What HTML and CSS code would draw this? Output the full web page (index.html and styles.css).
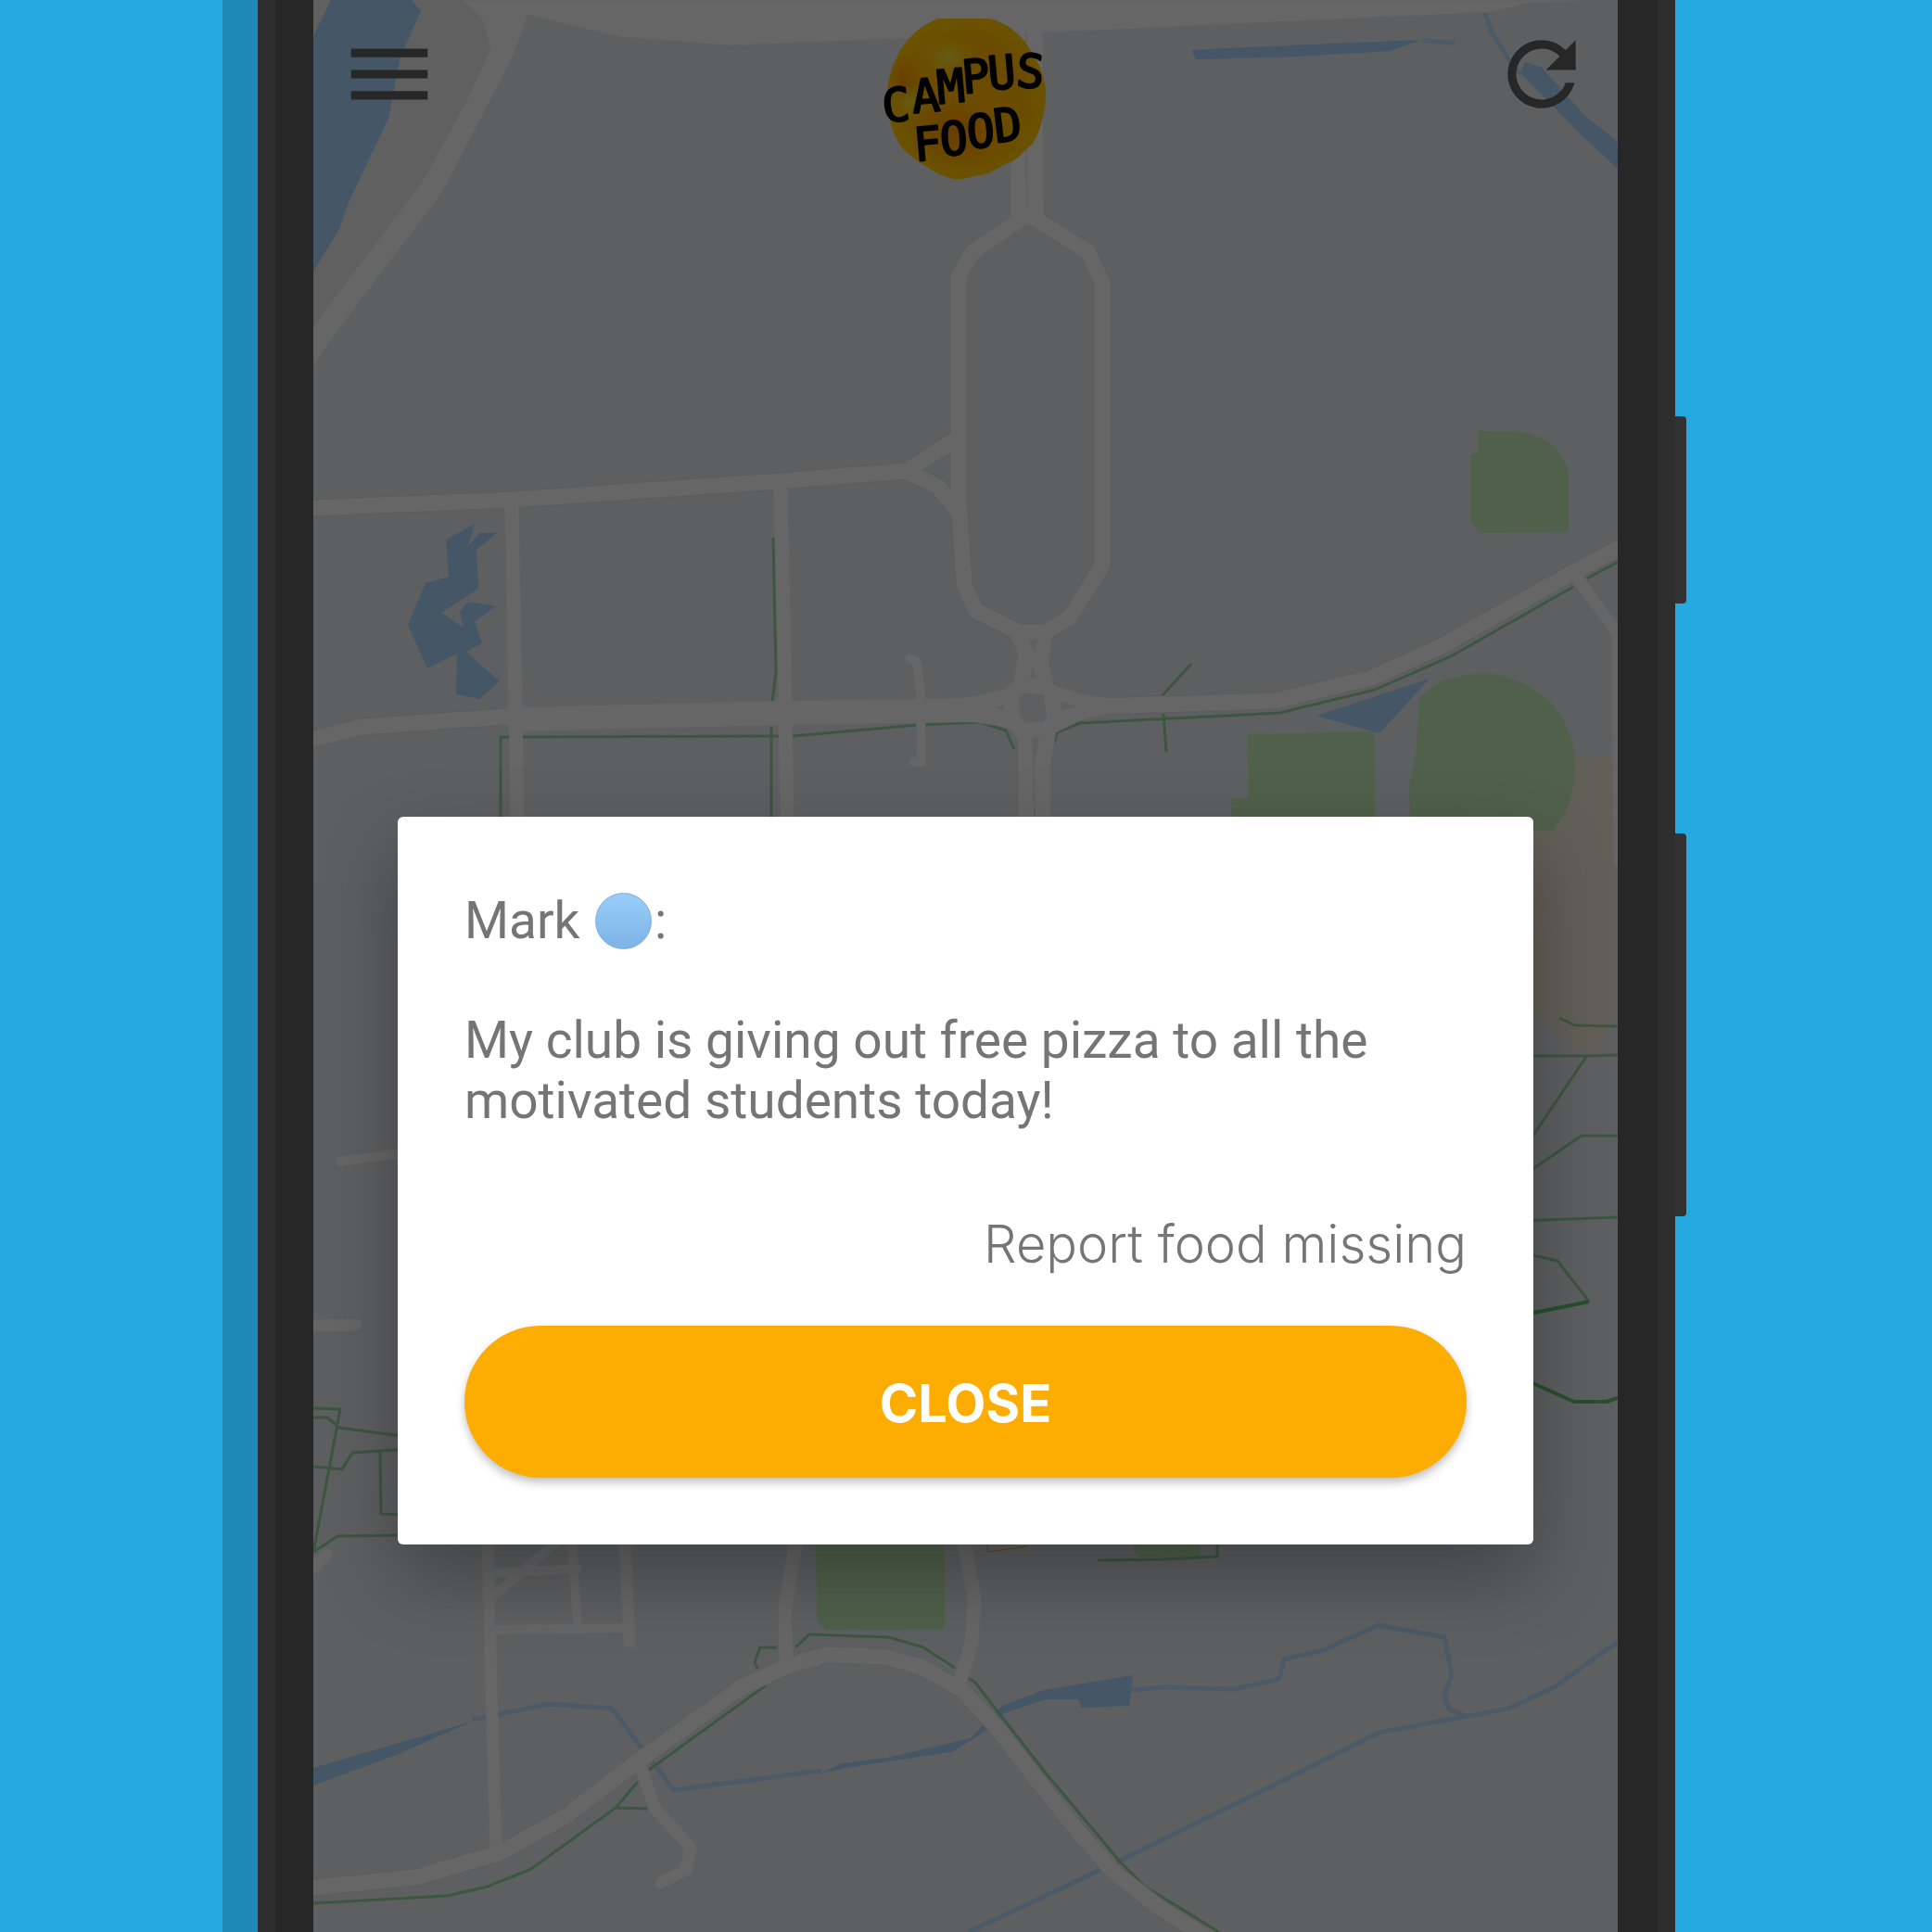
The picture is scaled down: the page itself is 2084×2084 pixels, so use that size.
FILE: index.html
```html
<!DOCTYPE html>
<html lang="en">
<head>
<meta charset="utf-8">
<meta name="viewport" content="width=device-width, initial-scale=1">
<title>Campus Food</title>
<link rel="stylesheet" href="styles.css">
</head>
<body>
<div class="stage">
  <div class="device">
    <span class="side-key side-key-power"></span>
    <span class="side-key side-key-volume"></span>
    <div class="screen">
      <svg class="map" viewBox="338 0 1407 2084" preserveAspectRatio="xMidYMin slice" aria-hidden="true">
        <!-- ground -->
        <path class="ground-alt" d="M338 0H498L520 20L529 53L500 115L456 195L380 296L338 352Z"/>
        <path class="plaza" d="M1699 816L1739 814L1742 896L1745 898V1100L1737 1106L1728 1128L1715 1139L1707 1136L1654 1094L1640 1080V896Z"/>
        <!-- parks -->
        <g class="park">
          <path d="M1594 465L1645 466L1667 474L1681 486L1690 503L1692 511V574L1597 575L1586 563V490H1594Z"/>
          <path d="M1345 792L1482 789L1483 890H1329L1328 862L1347 861Z"/>
          <path d="M1531 754L1545 741L1555 735L1580 728L1600 726L1620 728L1645 738L1667 752L1675 760L1688 780L1698 806L1699 835L1694 862L1688 877L1676 895L1640 896L1521 890L1520 845L1527 818Z"/>
          <path d="M880 1660H1019V1757L891 1758L881 1749Z"/>
          <path d="M1223 1660H1294V1679L1230 1680L1223 1673Z"/>
        </g>
        <!-- water -->
        <g class="water">
          <path d="M338 39L357 0H444L454 12L432 61L419 128L376 218L366 247L338 293Z"/>
          <path d="M481 582L512 565L504 590L517 575H536L514 593L516 635L476 661L500 677L496 660L505 649L535 654L512 670L520 694L503 703L539 735L517 754L492 749L493 705L461 721L440 674L459 629L484 622Z"/>
          <path d="M1285 54L1343 51L1533 43L1500 55L1380 62L1290 64Z"/>
          <path d="M1645 67L1662 72L1710 125L1745 153V182L1708 148L1640 79Z"/>
          <path d="M1420 772L1542 732L1488 791Z"/>
          <path d="M338 1907L444 1876L509 1857L430 1892L338 1926Z"/>
          <path d="M888 1912L908 1902L957 1896L1047 1875L1066 1855L1081 1840L1126 1823L1222 1807L1218 1840L1166 1842L1164 1833H1128L1083 1848L1062 1868L1027 1890L925 1905Z"/>
        </g>
        <g class="stream">
          <path d="M1535 44L1569 46"/>
          <path d="M1602 14L1609 35L1628 65L1640 80"/>
          <path d="M510 1855L592 1838L660 1843L727 1931L886 1910"/>
          <path d="M1220 1823L1255 1820L1332 1822L1380 1811L1385 1790L1427 1780L1487 1753L1558 1766L1566 1806L1558 1830L1563 1843L1583 1852"/>
          <path d="M1745 1771L1676 1820L1627 1843L1487 1869L1375 1925L1208 2007L1045 2084"/>
        </g>
        <!-- footpaths -->
        <g class="trail">
          <path d="M834 580L837 725L833 757M832 784V890M540 890V795L840 794M855 794L990 782L1057 779L1085 788L1094 808"/>
          <path d="M1137 802L1140 790L1165 780L1380 769L1483 744L1565 708L1697 633M1712 624L1745 606"/>
          <path d="M1253 751L1285 716M1255 770L1258 811"/>
          <path d="M1682 1098L1699 1106L1745 1107M1640 1139H1710L1745 1138M1711 1140L1640 1245M1640 1270L1706 1225H1745M1640 1317L1745 1313M1640 1351L1680 1360L1714 1404"/>
          <path d="M338 1519L367 1520L338 1675M338 1529H353L366 1540L440 1550M338 1582L369 1585L380 1567L440 1563M410 1565L411 1633L440 1634M338 1674L364 1657L440 1656"/>
          <path d="M338 2053L482 2045L526 2035L573 2016L664 1950L688 1922M664 1950L698 1951M700 1909L826 1818"/>
          <path d="M817 1800L814 1793L820 1777H838M858 1777L873 1763L958 1766L996 1777L1030 1799M1044 1810L1052 1815L1083 1855L1130 1915L1208 2008L1235 2035L1315 2084"/>
          <path d="M1184 1683L1255 1682L1313 1679V1660"/>
        </g>
        <path class="trail-main" d="M1714 1404L1640 1419M1640 1486L1698 1512H1733L1745 1508"/>
        <path class="boundary" d="M1065 1660V1674L1108 1668"/>
        <!-- road casings -->
        <g class="casing">
          <path class="w19" d="M1109 231L1049 272L1034 298V540L1040 630L1052 658L1099 682H1128L1154 666L1189 610V305L1174 272Z"/>
          <path class="w19" d="M338 548L553 539L841 519L977 508L1033 473M977 508L1011 524L1034 553"/>
          <path class="w19" d="M338 2036L449 2025L538 1999L609 1960L684 1903L798 1821L849 1797L890 1785L953 1787L994 1798L1038 1823L1075 1863L1124 1927L1164 1977L1204 2022L1254 2060L1299 2088"/>
          <path class="w19" d="M1180 762L1375 756L1480 731L1555 697L1692 620L1750 589"/>
          <path class="w19" d="M338 797L390 784L560 772"/>
        </g>
        <!-- roads -->
        <path class="road-area" d="M338 352L380 296L456 195L500 115L529 53L520 20L498 0H1745L1650 3L1612 13L1200 32L970 42L787 49L670 40L569 16L555 57L540 87L478 206L455 237L376 341L338 394Z"/>
        <path class="road-area" d="M1040 753L1085 743L1093 735L1098 705L1090 688L1099 680L1128 678L1135 686L1131 717L1137 738L1141 740L1170 749L1193 753V771L1165 777L1139 790L1133 826L1134 890H1098V800L1095 793L1084 784L1050 779Z"/>
        <g class="road">
          <path class="w17" d="M1109 231L1049 272L1034 298V540L1040 630L1052 658L1099 682H1128L1154 666L1189 610V305L1174 272Z"/>
          <path class="w17" d="M1097 30L1099 230M1116 20L1117 230"/>
          <path class="w17" d="M338 548L553 539L841 519L977 508L1033 473M977 508L1011 524L1034 553"/>
          <path class="w17" d="M338 797L390 784L560 772"/>
          <path class="w17" d="M1180 762L1375 756L1480 731L1555 697L1692 620L1750 589"/>
          <path class="w17" d="M338 2036L449 2025L538 1999L609 1960L684 1903L798 1821L849 1797L890 1785L953 1787L994 1798L1038 1823L1075 1863L1124 1927L1164 1977L1204 2022L1254 2060L1299 2088"/>
          <path class="w26" d="M560 776L847 769L1060 766"/>
          <path class="w15" d="M552 545L556 765L558 890M842 525L847 755L849 890"/>
          <path class="w15" d="M859 1660L847 1734L848 1790M1039 1660L1051 1723L1048 1773L1035 1815"/>
          <path class="w13" d="M526 1660L529 1780L535 2003M674 1660L679 1771M1700 622L1750 690M691 1905L706 1950L745 1993L740 2017L713 2031M338 1430L384 1429M334 1694L352 1677"/>
          <path class="w10" d="M981 710L989 713L993 750L994 822H986M530 1758L680 1756M530 1697L623 1692M617 1660L623 1755M604 1660L532 1722M366 1253L440 1243"/>
          <path class="w7" d="M1742 684L1744 930"/>
        </g>
        <!-- traffic islands -->
        <path class="island" d="M1104 748L1126 749L1129 775L1125 778L1107 780L1100 772L1099 753ZM1110 691L1118 690L1116 704ZM1114 718L1111 731H1118ZM1113 796L1121 795L1116 822L1117 890H1115L1114 822ZM1074 763L1083 760V766ZM1145 757L1161 762L1145 767ZM1106 160H1107L1108 224H1107Z"/>
      </svg>

      <header class="topbar">
        <button class="icon-button" type="button" aria-label="Menu">
          <svg viewBox="0 0 24 24"><path d="M3 18h18v-2H3v2zm0-5h18v-2H3v2zm0-7v2h18V6H3z"/></svg>
        </button>
        <svg class="logo" viewBox="0 0 174 174" role="img" aria-label="Campus Food">
          <defs>
            <radialGradient id="sun" cx="50%" cy="50%" r="50%">
              <stop offset="0" stop-color="#6b4c00"/>
              <stop offset="0.7" stop-color="#6b4b00"/>
              <stop offset="1" stop-color="#6a5200"/>
            </radialGradient>
            <radialGradient id="glow">
              <stop offset="0" stop-color="#665d18"/>
              <stop offset="1" stop-color="#665000" stop-opacity="0"/>
            </radialGradient>
            <radialGradient id="ember">
              <stop offset="0" stop-color="#693e00"/>
              <stop offset="1" stop-color="#693e00" stop-opacity="0"/>
            </radialGradient>
          </defs>
          <path fill="url(#sun)" d="M57 0L112 0C130 4 145 16 154 30C168 50 174 68 173 86C171 108 166 124 158 136C148 144 142 153 134 155C120 161 112 169 100 169C90 172 78 175 70 172C56 169 46 160 40 157C28 149 14 139 10 125C0 102 0 72 8 52C17 26 36 8 57 0Z"/>
          <ellipse cx="75" cy="122" rx="50" ry="35" fill="url(#ember)"/>
          <ellipse cx="20" cy="68" rx="18" ry="30" fill="url(#ember)"/>
          <ellipse cx="68" cy="42" rx="38" ry="28" fill="url(#glow)"/>
          <ellipse cx="26" cy="90" rx="24" ry="22" fill="url(#glow)"/>
          <text class="logo-text" x="-2 30 57 84 112 140 164 32 60 89 119" y="112 102 92 81 77 73 73 154 148 140 134" rotate="-5 -5 -5 -5 -5 5 0 -5 -4 -4 -7">CAMPUS FOOD</text>
        </svg>
        <button class="icon-button" type="button" aria-label="Refresh">
          <svg viewBox="0 0 24 24"><path d="M17.65 6.35A7.96 7.96 0 0 0 12 4a8 8 0 1 0 7.73 10h-2.08A6 6 0 1 1 12 6c1.66 0 3.14.69 4.22 1.78L13 11h7V4l-2.35 2.35z"/></svg>
        </button>
      </header>

      <main class="content">
        <section class="dialog" role="dialog" aria-label="Food report from Mark">
          <p class="author">Mark <span class="dot"></span>:</p>
          <p class="message">My club is giving out free pizza to all the motivated students today!</p>
          <button class="report" type="button">Report food missing</button>
          <button class="close" type="button">CLOSE</button>
        </section>
      </main>
    </div>
  </div>
</div>
</body>
</html>
```
FILE: styles.css
```css
* {
  box-sizing: border-box;
}

body {
  margin: 0;
  background: #26a9e0;
  font-family: Roboto, "Noto Sans", sans-serif;
}

button {
  margin: 0;
  padding: 0;
  border: 0;
  background: none;
  color: inherit;
  font: inherit;
  cursor: pointer;
}

.stage {
  display: grid;
  grid-template-columns: 278fr 1529fr 277fr;
  min-height: 100vh;
  overflow: hidden;
}

/* Phone body */
.device {
  position: relative;
  grid-column: 2;
  display: flex;
  min-width: 0;
  padding: 0 43px 0 41px;
  border: solid #2e2e2e;
  border-width: 0 19px;
  background: #272727;
  box-shadow: -38px 0 0 #1e88b6;
}

.side-key {
  position: absolute;
  left: calc(100% + 19px);
  width: 12px;
  border-radius: 0 4px 4px 0;
  background: #323232;
}

.side-key-power {
  top: 449px;
  height: 202px;
}

.side-key-volume {
  top: 899px;
  height: 413px;
}

.screen {
  position: relative;
  flex: 1;
  min-width: 0;
  overflow: hidden;
  background: #5e5f61;
}

/* Map */
.map {
  position: absolute;
  inset: 0;
  width: 100%;
  height: 100%;
}

.ground-alt { fill: #606060; }
.plaza { fill: #625f58; }
.park { fill: #50604a; }
.water { fill: #455766; }
.island { fill: #5e5f61; }

.road-area {
  fill: #666666;
  stroke: #606161;
  stroke-width: 1;
}

.stream,
.trail,
.trail-main,
.boundary,
.casing,
.road {
  fill: none;
  stroke-linejoin: round;
}

.stream { stroke: #4b5a66; stroke-width: 5; }
.trail { stroke: #3d5640; stroke-width: 3; }
.trail-main { stroke: #28502d; stroke-width: 4; }
.boundary { stroke: #684800; stroke-width: 1; }
.casing { stroke: #5c5d5d; }
.road { stroke: #666666; stroke-linecap: round; }

.w7 { stroke-width: 7; }
.w10 { stroke-width: 10; }
.w13 { stroke-width: 13; }
.w15 { stroke-width: 15; }
.w17 { stroke-width: 17; }
.w19 { stroke-width: 19; }
.w26 { stroke-width: 26; }

/* Top bar */
.topbar {
  position: relative;
  display: flex;
  justify-content: space-between;
  align-items: flex-start;
  padding: 20px 27px 0;
}

.icon-button {
  width: 110px;
  height: 110px;
  margin-top: 5px;
}

.icon-button svg {
  display: block;
  width: 100%;
  height: 100%;
  fill: #272727;
}

.logo {
  width: 174px;
  height: 174px;
  overflow: visible;
}

.logo-text {
  font-family: "DejaVu Sans Mono", "Liberation Mono", monospace;
  font-size: 50px;
  stroke: #000;
  stroke-width: 2px;
  stroke-linejoin: round;
}

/* Dialog */
.content {
  position: relative;
  padding: 687px 91px 96px;
}

.dialog {
  display: flex;
  flex-direction: column;
  padding: 80px 72px 72px;
  border-radius: 6px;
  background: #fff;
  color: #757575;
  font-size: 55px;
  line-height: 65px;
  box-shadow: 0 34px 84px rgba(0, 0, 0, 0.3);
}

.author,
.message {
  margin: 0;
}

.author {
  margin-bottom: 64px;
}

.dot {
  display: inline-block;
  width: 61px;
  height: 61px;
  margin: 0 3px;
  border: 1px solid #7fb0e0;
  border-radius: 50%;
  background: linear-gradient(#98cff9, #7eb2e6);
  vertical-align: -12px;
}

.report,
.close {
  font-family: Inter, "Open Sans", sans-serif;
  font-size: 56px;
  font-optical-sizing: none;
}

.report {
  align-self: flex-end;
  margin-top: 90px;
  font-weight: 300;
}

.close {
  height: 164px;
  margin-top: 55px;
  padding-top: 4px;
  border-radius: 82px;
  background: #fdad02;
  color: #fff;
  font-weight: 700;
  box-shadow: 0 5px 10px rgba(0, 0, 0, 0.25);
}
```
